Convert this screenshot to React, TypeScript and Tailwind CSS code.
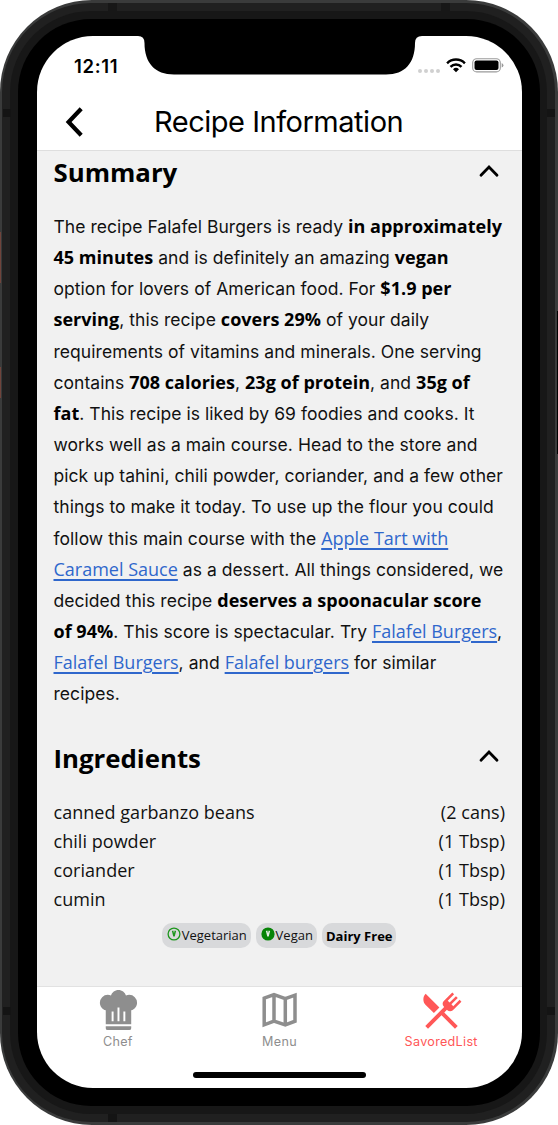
import type { ReactNode } from "react";

const B = ({ children }: { children: ReactNode }) => (
  <b className="font-['Open_Sans',sans-serif] text-[18px] font-bold tracking-[0.02px] text-black">{children}</b>
);

const A = ({ children }: { children: ReactNode }) => (
  <a className="font-['Open_Sans',sans-serif] text-[18px] tracking-normal text-[#2f67cc] underline decoration-[1.5px] underline-offset-[3px]">
    {children}
  </a>
);

const summary: ReactNode[] = [
  <>The recipe Falafel Burgers is ready <B>in approximately</B></>,
  <><B>45 minutes</B> and is definitely an amazing <B>vegan</B></>,
  <>option for lovers of American food. For <B>$1.9 per</B></>,
  <><B>serving</B>, this recipe <B>covers 29%</B> of your daily</>,
  <>requirements of vitamins and minerals. One serving</>,
  <>contains <B>708 calories</B>, <B>23g of protein</B>, and <B>35g of</B></>,
  <><B>fat</B>. This recipe is liked by 69 foodies and cooks. It</>,
  <>works well as a main course. Head to the store and</>,
  <>pick up tahini, chili powder, coriander, and a few other</>,
  <>things to make it today. To use up the flour you could</>,
  <>follow this main course with the <A>Apple Tart with</A></>,
  <><A>Caramel Sauce</A> as a dessert. All things considered, we</>,
  <>decided this recipe <B>deserves a spoonacular score</B></>,
  <><B>of 94%</B>. This score is spectacular. Try <A>Falafel Burgers</A>,</>,
  <><A>Falafel Burgers</A>, and <A>Falafel burgers</A> for similar</>,
  <>recipes.</>,
];

const ingredients = [
  ["canned garbanzo beans", "(2 cans)"],
  ["chili powder", "(1 Tbsp)"],
  ["coriander", "(1 Tbsp)"],
  ["cumin", "(1 Tbsp)"],
];

function SectionTitle({ children }: { children: ReactNode }) {
  return (
    <div className="flex h-9 items-center justify-between pr-[5px]">
      <h2 className="font-['Open_Sans',sans-serif] text-[25.8px] leading-9 font-bold text-black">{children}</h2>
      <svg width="22" height="16" viewBox="0 0 22 16" className="mb-[3px]" fill="none" stroke="#000" strokeWidth="2.8" strokeLinecap="round">
        <path d="M3 12.2 11 4l8 8.200" />
      </svg>
    </div>
  );
}

function VBadge({ filled }: { filled?: boolean }) {
  return (
    <svg width="14" height="14" viewBox="0 0 14 14" className="mb-[3px]" fill="none">
      <circle cx="7" cy="7" r={filled ? 6.6 : 5.9} fill={filled ? "#078407" : "none"} stroke={filled ? "none" : "#1d961d"} strokeWidth="1.3" />
      <path d="M5.6 3.8 7 9.4 8.4 3.8" stroke={filled ? "#e4efe4" : "#1d961d"} strokeWidth="1.5" />
    </svg>
  );
}

function Tab({ label, active, children }: { label: string; active?: boolean; children: ReactNode }) {
  return (
    <div className={active ? "flex flex-1 flex-col items-center text-[#ff5757]" : "flex flex-1 flex-col items-center text-[#8e8e8e]"}>
      {children}
      <span className="text-[12.6px] leading-4 tracking-[0.3px]">{label}</span>
    </div>
  );
}

export default function App() {
  return (
    <div className="relative h-[1125px] w-[558px] overflow-hidden bg-white font-['Inter',sans-serif] text-[#111]">
      <div className="h-full rounded-[92px] bg-[#3a3b3b] p-[3px] pl-[2px]">
        <div className="h-full rounded-[89px] bg-[#202020] p-[8px]">
          <div className="h-full rounded-[81px] bg-[#171717] p-[8px] pr-[7px]">
            <div className="h-full rounded-[73px] bg-black pt-[17px] pr-[18px] pb-[18px] pl-[19px]">
              <div className="flex h-full flex-col overflow-hidden rounded-[56px] bg-white">
                <div className="flex h-[58px] shrink-0 items-center justify-between pr-[18px] pl-[37px]">
                  <span className="pt-[3px] text-[18.5px] font-semibold tracking-[0.7px] text-black">12:11</span>
                  <div className="flex items-center">
                    <div className="mt-[11px] mr-[6px] flex gap-[2px]">
                      {[0, 1, 2, 3].map((i) => (
                        <i key={i} className="size-[4px] rounded-full bg-[#d0d0d0]" />
                      ))}
                    </div>
                    <svg width="20" height="15" viewBox="0 0 20 15" className="mr-[6px]">
                      <g fill="none" stroke="#000" strokeWidth="2.500">
                        <path d="M1.1 5.3a12.6 12.6 0 0 1 17.8 0" />
                        <path d="M4.5 8.8a7.8 7.8 0 0 1 11 0" />
                      </g>
                      <path d="m10 14.3-3-3.1a4.3 4.3 0 0 1 6 0z" />
                    </svg>
                    <svg width="32" height="15" viewBox="0 0 32 15">
                      <rect x=".7" y=".7" width="27.6" height="13.2" rx="4" fill="none" stroke="#9a9a9a" strokeWidth="1.1" />
                      <rect x="2.5" y="2.5" width="24" height="9.6" rx="2" />
                      <path d="M29.7 5v4.6q1.7-.7 1.7-2.3T29.7 5" fill="#9a9a9a" />
                    </svg>
                  </div>
                </div>
                <header className="flex h-[57px] shrink-0 items-center border-b border-[#dedede] pl-[27px]">
                  <svg width="20" height="30" viewBox="0 0 20 30" className="mb-px" fill="none" stroke="#000" strokeWidth="4.2">
                    <path d="M17.2 1.8 4.600 15l12.600 13.2" />
                  </svg>
                  <h1 className="ml-[70px] text-[29px] leading-9 tracking-[-0.48px] whitespace-nowrap text-black">Recipe Information</h1>
                </header>
                <main className="flex h-[835px] shrink-0 flex-col bg-[#f1f1f1] pt-[3px] pr-[17px] pl-[16.5px]">
                  <SectionTitle>Summary</SectionTitle>
                  <div className="mt-[21px] text-[17.5px] tracking-[0.05px]">
                    {summary.map((line, i) => (
                      <p key={i} className="h-[31.17px] leading-[31.17px] whitespace-nowrap">{line}</p>
                    ))}
                  </div>
                  <div className="mt-[30px]">
                    <SectionTitle>Ingredients</SectionTitle>
                  </div>
                  <div className="mt-[22px] font-['Open_Sans',sans-serif] text-[18px] leading-[29px] tracking-[0.04px]">
                    {ingredients.map(([name, qty]) => (
                      <div key={name} className="flex justify-between">
                        <span>{name}</span>
                        <span>{qty}</span>
                      </div>
                    ))}
                  </div>
                  <div className="mt-[9px] flex justify-center gap-[5px] font-['Open_Sans',sans-serif] text-[13px] leading-[26px]">
                    <span className="flex h-[25px] w-[89px] items-center justify-center rounded-[10px] bg-[#d8d9db]">
                      <VBadge />
                      <span className="pl-px">Vegetarian</span>
                    </span>
                    <span className="flex h-[25px] w-[61px] items-center justify-center rounded-[10px] bg-[#d8d9db]">
                      <VBadge filled />
                      <span className="pl-px">Vegan</span>
                    </span>
                    <span className="h-[25px] w-[74px] rounded-[10px] bg-[#d8d9db] text-center font-bold text-black">Dairy Free</span>
                  </div>
                </main>
                <nav className="flex h-[84px] shrink-0 border-t border-[#e2e2e2]">
                  <Tab label="Chef">
                    <svg width="47" height="47" viewBox="0 0 24 24" fill="currentColor">
                      <path d="M12.5 1.5C10.73 1.5 9.17 2.67 8.67 4.37C8.14 4.13 7.58 4 7 4A4 4 0 0 0 3 8C3 9.82 4.24 11.41 6 11.87V19H19V11.87C20.76 11.41 22 9.82 22 8A4 4 0 0 0 18 4C17.42 4 16.86 4.13 16.33 4.37C15.83 2.67 14.27 1.5 12.5 1.5M12 10.5H13V17.5H12V10.5M9 12.5H10V17.5H9V12.5M15 12.5H16V17.5H15V12.5M6 20V21A1 1 0 0 0 7 22H18A1 1 0 0 0 19 21V20H6Z" />
                    </svg>
                  </Tab>
                  <Tab label="Menu">
                    <svg width="47" height="47" viewBox="0 0 47 47" fill="none" stroke="currentColor" strokeWidth="3.5">
                      <path d="M8.2 11.2 18 7.6l11.300 4 9.7-3.4v26L29.300 38 18 34l-9.800 3.800zM18 7.6V34M29.300 11.6V38" />
                    </svg>
                  </Tab>
                  <Tab label="SavoredList" active>
                    <svg width="47" height="47" viewBox="0 0 24 24" fill="currentColor">
                      <path d="M8.1 13.34 3.91 9.16C2.35 7.59 2.35 5.06 3.91 3.5L10.93 10.5 8.1 13.34M13.41 13 20.29 19.88 18.88 21.29 12 14.41 5.12 21.29 3.71 19.88 13.36 10.22 13.16 10C12.38 9.23 12.38 7.97 13.16 7.19L17.5 2.82 18.43 3.74 15.19 7 16.15 7.94 19.39 4.69 20.31 5.61 17.06 8.85 18 9.81 21.26 6.56 22.18 7.5 17.81 11.84C17.03 12.62 15.77 12.62 15 11.84L14.78 11.64 13.41 13Z" />
                    </svg>
                  </Tab>
                </nav>
                <div className="mx-auto mt-[2px] h-[6px] w-[173px] shrink-0 rounded-full bg-black" />
              </div>
            </div>
          </div>
        </div>
      </div>
      <svg className="absolute top-[34px] left-[138px]" width="284" height="42" viewBox="0 0 284 42">
        <path d="M0 0V2Q6.5 2 6.5 9C6.5 29 17 40.5 36 40.5H248C267 40.5 277 29 277 9Q277 2 284 2V0Z" />
      </svg>
      <i className="absolute top-[3px] left-[108px] h-[8px] w-[9px] bg-[#171717]" />
      <i className="absolute top-[3px] left-[441px] h-[8px] w-[9px] bg-[#171717]" />
      <i className="absolute top-[1114px] left-[108px] h-[8px] w-[9px] bg-[#141414]" />
      <i className="absolute top-[109px] left-[3px] h-[8px] w-[8px] bg-[#141414]" />
      <i className="absolute top-[109px] left-[547px] h-[8px] w-[8px] bg-[#141414]" />
      <i className="absolute top-[1007px] left-[3px] h-[8px] w-[8px] bg-[#141414]" />
      <i className="absolute top-[1007px] left-[547px] h-[8px] w-[8px] bg-[#141414]" />
      <i className="absolute top-[232px] left-0 h-[51px] w-px bg-[#70443c]" />
      <i className="absolute top-[367px] left-0 h-[31px] w-px bg-[#70443c]" />
      <i className="absolute top-[311px] left-[557px] h-[143px] w-px bg-black" />
    </div>
  );
}
